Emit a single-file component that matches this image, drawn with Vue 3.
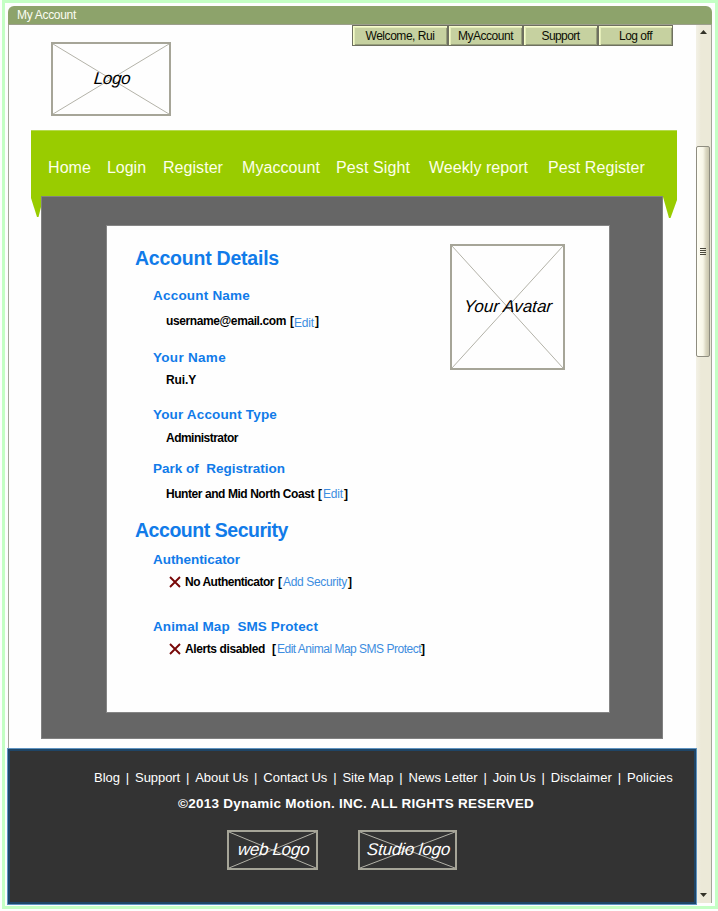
<script setup>
const toolbar = [
  { label: 'Welcome, Rui', w: 69, wide: true },
  { label: 'MyAccount', w: 55 },
  { label: 'Support', w: 38 },
  { label: 'Log off', w: 33 },
]

const nav = [
  { label: 'Home', w: 43 },
  { label: 'Login', w: 39 },
  { label: 'Register', w: 60 },
  { label: 'Myaccount', w: 78 },
  { label: 'Pest Sight', w: 74 },
  { label: 'Weekly report', w: 99 },
  { label: 'Pest Register', w: 97 },
]

const details = [
  { kind: 'title', text: 'Account Details', w: 144 },
  { kind: 'label', text: 'Account Name', w: 97 },
  { kind: 'value', text: 'username@email.com', w: 120, link: 'Edit', lw: 20, low: true },
  { kind: 'label', text: 'Your Name', w: 73 },
  { kind: 'value', text: 'Rui.Y', w: 30 },
  { kind: 'label', text: 'Your Account Type', w: 124 },
  { kind: 'value', text: 'Administrator', w: 72 },
  { kind: 'label', text: 'Park of  Registration', w: 132 },
  { kind: 'value', text: 'Hunter and Mid North Coast', w: 148, link: 'Edit', lw: 20 },
  { kind: 'title', text: 'Account Security', w: 153 },
  { kind: 'label', text: 'Authenticator', w: 87 },
  { kind: 'value', text: 'No Authenticator', w: 89, link: 'Add Security', lw: 64, off: true },
  { kind: 'label', text: 'Animal Map  SMS Protect', w: 165 },
  { kind: 'value', text: 'Alerts disabled', w: 80, link: 'Edit Animal Map SMS Protect', lw: 144, off: true, far: true },
]

const links = [
  { label: 'Blog', w: 26 },
  { label: 'Support', w: 45 },
  { label: 'About Us', w: 53 },
  { label: 'Contact Us', w: 64 },
  { label: 'Site Map', w: 51 },
  { label: 'News Letter', w: 69 },
  { label: 'Join Us', w: 43 },
  { label: 'Disclaimer', w: 61 },
  { label: 'Policies', w: 46 },
]

// Tracks a text run so that it spans the given width in pixels.
const vFit = {
  mounted(el, { value }) {
    const natural = el.getBoundingClientRect().width
    const count = el.textContent.length
    el.style.letterSpacing = `${(value - natural) / count}px`
  },
}
</script>

<template>
  <div class="frame">
    <div class="window">
      <header class="titlebar"><span v-fit="59">My Account</span></header>
      <div class="body">
        <main class="page">
          <div class="top">
            <div class="placeholder logo">
              <svg class="cross" viewBox="0 0 100 100" preserveAspectRatio="none"><path d="M0 0L100 100M100 0L0 100" /></svg>
              <span v-fit="38">Logo</span>
            </div>
            <div class="toolbar">
              <button v-for="b in toolbar" :key="b.label" class="tool" :class="{ wide: b.wide }"><span v-fit="b.w">{{ b.label }}</span></button>
            </div>
          </div>

          <nav class="ribbon">
            <a v-for="n in nav" :key="n.label" v-fit="n.w">{{ n.label }}</a>
          </nav>

          <section class="panel">
            <div class="card">
              <div class="details">
                <div v-for="(d, i) in details" :key="i" :class="[d.kind, { off: d.off }]">
                  <svg v-if="d.off" class="x" viewBox="0 0 12 12"><path d="M1 1L11 11M11 1L1 11" /></svg>
                  <span v-fit="d.w" class="run">{{ d.text }}</span>
                  <span v-if="d.link" class="action" :class="{ far: d.far }">[<a v-fit="d.lw" :class="{ low: d.low }">{{ d.link }}</a>]</span>
                </div>
              </div>
              <div class="placeholder avatar">
                <svg class="cross" viewBox="0 0 100 100" preserveAspectRatio="none"><path d="M0 0L100 100M100 0L0 100" /></svg>
                <span v-fit="90">Your Avatar</span>
              </div>
            </div>
          </section>

          <footer class="footer">
            <div class="links">
              <template v-for="(l, i) in links" :key="l.label">
                <i v-if="i">|</i>
                <a v-fit="l.w">{{ l.label }}</a>
              </template>
            </div>
            <div class="copy"><span v-fit="356">©2013 Dynamic Motion. INC. ALL RIGHTS RESERVED</span></div>
            <div class="brands">
              <div class="placeholder web">
                <svg class="cross" viewBox="0 0 100 100" preserveAspectRatio="none"><path d="M0 0L100 100M100 0L0 100" /></svg>
                <span v-fit="73">web Logo</span>
              </div>
              <div class="placeholder studio">
                <svg class="cross" viewBox="0 0 100 100" preserveAspectRatio="none"><path d="M0 0L100 100M100 0L0 100" /></svg>
                <span v-fit="85">Studio logo</span>
              </div>
            </div>
          </footer>
        </main>

        <aside class="scroll">
          <svg class="arrow" viewBox="0 0 7 4"><path d="M0 4L3.5 0L7 4Z" /></svg>
          <div class="thumb"><b /><b /><b /><b /></div>
          <svg class="arrow down" viewBox="0 0 7 4"><path d="M0 0L3.5 4L7 0Z" /></svg>
        </aside>
      </div>
    </div>
  </div>
</template>

<style>
body {
  background: #fefefe;
}
</style>

<style scoped>
* {
  box-sizing: border-box;
}
.frame {
  width: 716px;
  height: 909px;
  margin-left: 2px;
  border: 3px solid #c4ffc4;
  padding: 3px;
  background: #fefefe;
  font-family: "Liberation Sans", Arial, sans-serif;
}
span,
a {
  white-space: pre;
}
.window {
  width: 704px;
  display: flex;
  flex-direction: column;
}
.titlebar {
  height: 19px;
  padding-left: 9px;
  border-bottom: 1px solid #9c9f8c;
  border-radius: 6px 6px 0 0;
  background: #8da36b;
  color: #fbfdf2;
  font-size: 12px;
  line-height: 18px;
}
.body {
  display: flex;
  height: 880px;
}
.page {
  width: 688px;
  display: flex;
  flex-direction: column;
  border-left: 1px solid #a5a59a;
}
.top {
  display: flex;
  justify-content: space-between;
  height: 105px;
  padding: 0 23px 0 42px;
}
.placeholder {
  position: relative;
  display: flex;
  align-items: center;
  justify-content: center;
  padding: 0 0 0 2px;
  border: 2px solid #a6a598;
  font-size: 17px;
  line-height: 20px;
  font-style: italic;
  color: #000;
}
.placeholder span {
  position: relative;
  transform: skewX(-5deg);
}
.cross {
  position: absolute;
  inset: 0;
  width: 100%;
  height: 100%;
}
.cross path {
  stroke: #b3b2a8;
  stroke-width: 1px;
  vector-effect: non-scaling-stroke;
  fill: none;
}
.logo {
  width: 120px;
  height: 74px;
  margin-top: 17px;
}
.toolbar {
  display: flex;
  height: 21px;
}
.tool {
  width: 75px;
  height: 21px;
  padding: 1px 0 0;
  border: 1px solid #6e7060;
  background: #c6d1a0;
  box-shadow: inset 1px 1px #f7fdcb, inset 2px 2px #e4edb9, inset -1px -1px #979f7b;
  font: 12px/18px "Liberation Sans", Arial, sans-serif;
  color: #0c0e04;
}
.tool.wide {
  width: 96px;
}
.ribbon {
  position: relative;
  display: grid;
  grid-template-columns: 59px 56px 79px 94px 93px 119px auto;
  justify-items: start;
  width: 646px;
  height: 66px;
  margin-left: 22px;
  padding-left: 17px;
  border-top: 1px solid #b5da4f;
  background: #9c0;
  color: #fdffe9;
  font-size: 16px;
  line-height: 73px;
}
.ribbon::before,
.ribbon::after {
  content: "";
  position: absolute;
  top: 100%;
  height: 22px;
  background: #9c0;
}
.ribbon::before {
  left: 0;
  width: 10px;
  clip-path: polygon(0 0, 10px 0, 10px 11px, 7.5px 21px, 6px 21px, 0 2px);
}
.ribbon::after {
  right: 0;
  width: 14px;
  clip-path: polygon(0 0, 14px 0, 14px 4px, 7.5px 22px, 6px 22px, 0 1px);
}
.panel {
  width: 622px;
  height: 543px;
  margin-left: 32px;
  padding: 28px 0 0 64px;
  border: 1px solid #818181;
  background: #666;
}
.card {
  display: flex;
  width: 504px;
  height: 488px;
  border: 1px solid #858585;
  background: #fefefe;
}
.details {
  display: grid;
  grid-template-rows: 44px 36px 25px 37px 22px 35px 23px 31px 25px 38px 28px 22px 45px 22px;
  width: 343px;
  padding-left: 28px;
  align-content: start;
  align-items: end;
}
.details > div {
  display: flex;
  line-height: 20px;
  font-weight: bold;
}
.title {
  font-size: 19.5px;
  color: #117be9;
}
.details > .title {
  line-height: 24px;
}
.label {
  padding-left: 18px;
  font-size: 13.5px;
  color: #117be9;
}
.value {
  padding-left: 31px;
  font-size: 12px;
  color: #000;
}
.x {
  width: 12px;
  height: 12px;
  margin: 4px 4px 0 3px;
}
.x path {
  stroke: #780808;
  stroke-width: 1.9;
  fill: none;
}
.action {
  display: flex;
  margin-left: 4px;
}
.action.far {
  margin-left: 7px;
}
.action a {
  margin: 0 1px;
  color: #3d8de0;
  font-weight: normal;
}
.action.far a {
  margin-right: 0;
}
.action .low {
  padding-top: 2px;
  margin: 0 1px -2px 0;
}
.avatar {
  width: 115px;
  height: 126px;
  margin-top: 18px;
}
.footer {
  width: 690px;
  height: 157px;
  margin: 9px 0 0 -2px;
  border: 1px solid #5f93c0;
  box-shadow: inset 0 0 0 2px #1f4566;
  background: #333;
  color: #fff;
  position: relative;
}
.links {
  display: flex;
  justify-content: space-between;
  width: 579px;
  margin: 19px 0 0 86px;
  font-size: 13px;
  line-height: 20px;
}
.links i {
  font-style: normal;
}
.copy {
  margin: 5px 0 0 170px;
  font-size: 13.5px;
  line-height: 22px;
  font-weight: bold;
}
.brands {
  display: flex;
  gap: 40px;
  margin: 15px 0 0 219px;
}
.brands .placeholder {
  height: 40px;
  color: #fff;
}
.web {
  width: 91px;
}
.studio {
  width: 99px;
}
.scroll {
  display: flex;
  flex-direction: column;
  align-items: center;
  width: 16px;
  height: 878px;
  padding: 5px 1px 6px 0;
  border-right: 1px solid #a5a59a;
  background: linear-gradient(90deg, #f3f1e6, #ece9d8 5px);
}
.arrow {
  width: 7px;
  height: 4px;
  fill: #333227;
}
.thumb {
  display: flex;
  flex-direction: column;
  align-items: center;
  justify-content: center;
  gap: 1px;
  width: 14px;
  height: 211px;
  margin-top: 112px;
  border: 1px solid #8f8d80;
  border-radius: 2px;
  background: linear-gradient(90deg, #fffef4, #f8f6e8 50%, #dad6c0 75%, #c8c4ad);
}
.thumb b {
  width: 6px;
  height: 1px;
  background: #4a483c;
}
.down {
  margin-top: auto;
}
</style>
